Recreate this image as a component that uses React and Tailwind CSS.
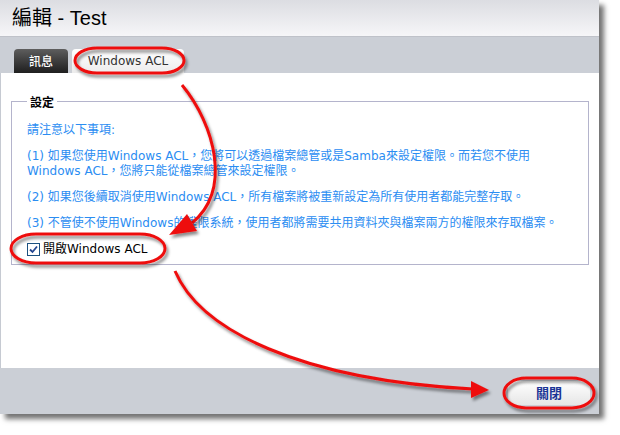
import React from "react";

const FONT = "font-['DejaVu_Sans','Noto_Sans_CJK_TC',sans-serif]";

export default function App() {
  return (
    <div className="relative w-[620px] h-[435px] bg-white overflow-hidden">
      <div className="w-[599px] h-[414px] flex flex-col shadow-[5px_5px_5px_rgba(0,0,0,0.55)]">
        {/* Title */}
        <div className="h-[37px] shrink-0 bg-gradient-to-b from-[#dcdde2] to-[#f6f6f8] border-b border-[#bfc2c9] flex items-center pl-[12px] text-[20px] text-black font-['Liberation_Sans','Noto_Sans_CJK_TC',sans-serif]">
          編輯 - Test
        </div>
        {/* Tabs */}
        <div className="h-[36px] shrink-0 bg-[#cbcfd6] flex items-end pl-[14px] gap-[4px]">
          <div className="w-[54px] h-[24px] rounded-t-[4px] bg-gradient-to-b from-[#5e5e5e] to-[#1f1f1f] text-white text-[12px] flex items-center justify-center font-['Noto_Sans_CJK_TC',sans-serif] font-medium">
            訊息
          </div>
          <div className={`w-[112px] h-[24px] rounded-t-[4px] bg-gradient-to-b from-white to-[#ececec] text-[#333333] text-[12px] flex items-center justify-center ${FONT}`}>
            Windows ACL
          </div>
        </div>
        {/* Content */}
        <div className="flex-1 bg-white border-l border-[#c6cad2] pt-[21px] px-[10px]">
          <fieldset className="border border-[#b4b4cc] pl-[15px] pr-[15px] pt-[14px] pb-[7px]">
            <legend className="px-[3px] leading-[15px] text-[12px] font-bold text-black font-['Noto_Sans_CJK_TC',sans-serif]">
              設定
            </legend>
            <div className={`flex flex-col gap-[11px] text-[12px] leading-[15px] text-[#2b8df2] whitespace-nowrap ${FONT}`}>
              <p>請注意以下事項:</p>
              <p>
                (1) 如果您使用Windows ACL，您將可以透過檔案總管或是Samba來設定權限。而若您不使用
                <br />
                Windows ACL，您將只能從檔案總管來設定權限。
              </p>
              <p>(2) 如果您後續取消使用Windows ACL，所有檔案將被重新設定為所有使用者都能完整存取。</p>
              <p>(3) 不管使不使用Windows的權限系統，使用者都將需要共用資料夾與檔案兩方的權限來存取檔案。</p>
              <div className="flex items-center gap-[3px] text-black">
                <span className="w-[13px] h-[13px] border border-[#1c5180] bg-white flex items-center justify-center">
                  <svg width="9" height="9" viewBox="0 0 9 9">
                    <path d="M1 4.5 L3.5 7 L8 1.5" fill="none" stroke="#23458f" strokeWidth="1.8" />
                  </svg>
                </span>
                <span>開啟Windows ACL</span>
              </div>
            </div>
          </fieldset>
        </div>
        {/* Footer */}
        <div className="h-[46px] shrink-0 bg-[#cbcfd6] flex items-start justify-end pt-[13px] pr-[9px]">
          <div className="w-[82px] h-[24px] rounded-[5px] bg-gradient-to-b from-white to-[#e6e6e6] flex items-center justify-center text-[13px] font-bold text-[#1a3596] font-['Noto_Sans_CJK_TC',sans-serif]">
            關閉
          </div>
        </div>
      </div>

      {/* Annotations */}
      <svg className="absolute inset-0 pointer-events-none" width="620" height="435" viewBox="0 0 620 435">
        <defs>
          <filter id="sh" x="-20%" y="-20%" width="140%" height="140%">
            <feDropShadow dx="2" dy="3" stdDeviation="1.5" floodColor="#000" floodOpacity="0.45" />
          </filter>
        </defs>
        <g filter="url(#sh)" fill="none" stroke="#ee1111" strokeWidth="3">
          <rect x="75" y="48" width="109" height="25" rx="22" ry="12.5" />
          <rect x="11" y="234" width="154" height="29" rx="25" ry="14.5" />
          <rect x="504" y="378" width="90" height="30" rx="22" ry="15" />
          <path d="M182 85 C215 125 232 190 192 223" />
          <path d="M175 271 C200 330 300 380 473 389" />
        </g>
        <g filter="url(#sh)" fill="#ee1111">
          <polygon points="169,235 187,214 197,231" />
          <polygon points="489,390 471,381 471,398" />
        </g>
      </svg>
    </div>
  );
}
